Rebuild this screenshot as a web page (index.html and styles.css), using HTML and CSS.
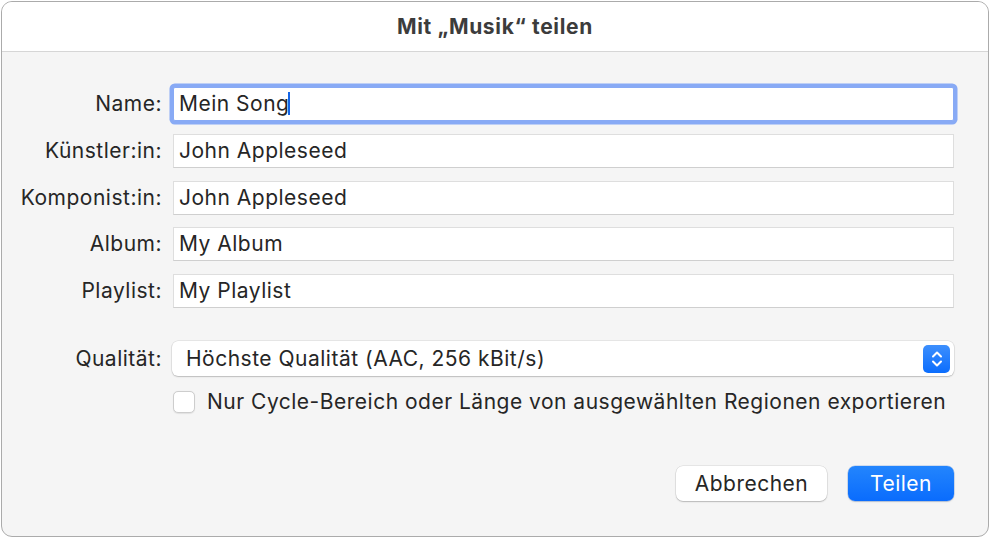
FILE: index.html
```html
<!DOCTYPE html>
<html lang="de">
<head>
<meta charset="utf-8">
<title>Mit „Musik“ teilen</title>
<link rel="stylesheet" href="styles.css">
</head>
<body>
<div class="window">
  <div class="titlebar">Mit „Musik“ teilen</div>
  <div class="content">
    <div class="form">
      <label class="label">Name:</label>
      <div class="field focused"><span class="value">Mein Song</span><span class="caret"></span></div>
      <label class="label">Künstler:in:</label>
      <div class="field"><span class="value">John Appleseed</span></div>
      <label class="label">Komponist:in:</label>
      <div class="field"><span class="value">John Appleseed</span></div>
      <label class="label">Album:</label>
      <div class="field"><span class="value">My Album</span></div>
      <label class="label">Playlist:</label>
      <div class="field"><span class="value">My Playlist</span></div>
    </div>
    <div class="form quality">
      <label class="label">Qualität:</label>
      <div class="select">
        <span class="value">Höchste Qualität (AAC, 256 kBit/s)</span>
        <span class="stepper">
          <svg width="14" height="20" viewBox="0 0 14 20"><path d="M3 7.5 L7 3.5 L11 7.5 M3 12.5 L7 16.5 L11 12.5" fill="none" stroke="#fff" stroke-width="2" stroke-linecap="round" stroke-linejoin="round"/></svg>
        </span>
      </div>
      <span></span>
      <div class="check-row">
        <span class="checkbox"></span>
        <span class="check-label">Nur Cycle-Bereich oder Länge von ausgewählten Regionen exportieren</span>
      </div>
    </div>
    <div class="buttons">
      <button class="btn">Abbrechen</button>
      <button class="btn primary">Teilen</button>
    </div>
  </div>
</div>
</body>
</html>
```

FILE: styles.css
```css
html, body {
  margin: 0;
  padding: 0;
  background: #ffffff;
}

body {
  font-family: Inter, "Noto Sans", "Liberation Sans", sans-serif;
  color: #262626;
  letter-spacing: 0.5px;
}

.window {
  box-sizing: border-box;
  margin: 1px 0 0 1px;
  width: 988px;
  height: 536px;
  border: 1px solid #ababab;
  border-radius: 11px;
  background: #f5f5f5;
  overflow: hidden;
}

.titlebar {
  height: 50px;
  background: #ffffff;
  border-bottom: 1px solid #d6d6d6;
  box-sizing: border-box;
  display: flex;
  align-items: center;
  justify-content: center;
  font-weight: 700;
  font-size: 21px;
  letter-spacing: 0.65px;
  color: #3c3c3c;
}

.content {
  padding: 35px 34px 0 0;
  display: flex;
  flex-direction: column;
}

.form {
  display: grid;
  grid-template-columns: 160px 1fr;
  column-gap: 11px;
  row-gap: 12.75px;
  align-items: center;
}

.label {
  text-align: right;
  font-size: 21px;
  color: #262626;
  padding-bottom: 1px;
}

.field {
  box-sizing: border-box;
  height: 34px;
  background: #ffffff;
  border: 1px solid #dedede;
  border-bottom-color: #cfcfcf;
  display: flex;
  align-items: center;
  padding: 0 0 1px 5px;
  font-size: 21px;
  color: #262626;
}

.field.focused {
  border: 1px solid #88aaf5;
  box-shadow: 0 0 0 3.5px #88aaf5;
  border-radius: 2px;
}

.caret {
  display: inline-block;
  width: 2px;
  height: 23px;
  background: #1565e6;
  margin-left: -1px;
}

.quality {
  margin-top: 33px;
  row-gap: 13px;
}

.select {
  box-sizing: border-box;
  height: 35px;
  background: #ffffff;
  border-radius: 6px;
  box-shadow: 0 0 0 0.5px rgba(0,0,0,0.12), 0 1px 1.5px rgba(0,0,0,0.18);
  display: flex;
  align-items: center;
  justify-content: space-between;
  padding: 0 4px 0 14px;
  font-size: 21px;
  color: #262626;
  margin-left: -1px;
}

.stepper {
  width: 27px;
  height: 28px;
  border-radius: 5px;
  background: linear-gradient(#3d8ffd, #0b6dfd);
  display: flex;
  align-items: center;
  justify-content: center;
}

.check-row {
  display: flex;
  align-items: center;
  gap: 12px;
}

.checkbox {
  box-sizing: border-box;
  width: 22px;
  height: 22px;
  border: 1px solid #cdcdcd;
  border-radius: 5px;
  background: #ffffff;
  box-shadow: 0 0.5px 1px rgba(0,0,0,0.08);
}

.check-label {
  font-size: 21px;
  color: #262626;
}

.buttons {
  margin-top: 52px;
  display: flex;
  justify-content: flex-end;
  gap: 21px;
}

.btn {
  font-family: Inter, "Noto Sans", "Liberation Sans", sans-serif;
  font-size: 21px;
  letter-spacing: 0.5px;
  height: 35px;
  border: none;
  border-radius: 7px;
  padding: 0 0 1px;
  background: #ffffff;
  color: #262626;
  width: 151px;
  box-shadow: 0 0 0 0.5px rgba(0,0,0,0.12), 0 1px 1.5px rgba(0,0,0,0.2);
}

.btn.primary {
  width: 106px;
  background: linear-gradient(#2385fd, #0a6cfd);
  color: #ffffff;
  box-shadow: 0 0 0 0.5px rgba(0,80,200,0.3), 0 1px 1.5px rgba(0,0,0,0.15);
}
```
